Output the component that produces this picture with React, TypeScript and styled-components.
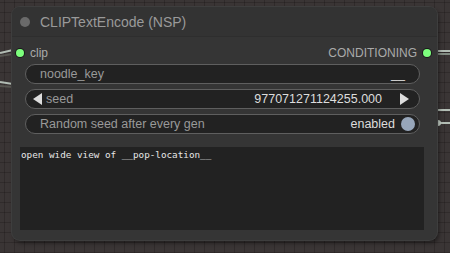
import React from "react";
import styled, { createGlobalStyle } from "styled-components";

const Global = createGlobalStyle`
  html, body { margin: 0; padding: 0; }
  body {
    width: 450px; height: 253px; overflow: hidden;
    background-color: #3a3535;
    background-image:
      linear-gradient(rgba(0,0,0,0.18) 1px, transparent 1px),
      linear-gradient(90deg, rgba(0,0,0,0.18) 1px, transparent 1px);
    background-size: 10px 10px;
    background-position: 4px 2px;
    font-family: "Liberation Sans", Arial, sans-serif;
  }
`;

const Canvas = styled.div`
  position: relative;
  width: 450px;
  height: 253px;
  padding: 7px 0 0 12px;
  box-sizing: border-box;
`;

const Wires = styled.svg`
  position: absolute;
  left: 0;
  top: 0;
  pointer-events: none;
`;

const Node = styled.div`
  position: relative;
  width: 425px;
  height: 233px;
  background: #353535;
  border-radius: 8px;
  box-shadow: 0 0 0 1px #3e3e3e, 2px 3px 4px rgba(0,0,0,0.45);
  display: flex;
  flex-direction: column;
  overflow: hidden;
`;

const Header = styled.div`
  height: 30px;
  flex: none;
  display: flex;
  align-items: center;
  padding-left: 8px;
  gap: 10px;
  background: #333333;
  border-bottom: 1px solid #2e2e2e;
  box-sizing: border-box;
`;

const HeaderDot = styled.span`
  width: 10px;
  height: 10px;
  border-radius: 50%;
  background: #6a6a6a;
`;

const Title = styled.span`
  font-size: 14px;
  color: #9a9a9a;
`;

const Body = styled.div`
  display: flex;
  flex-direction: column;
  padding-top: 5px;
`;

const SlotRow = styled.div`
  height: 21px;
  display: flex;
  align-items: center;
  justify-content: space-between;
  padding: 0 6px 0 4px;
  font-size: 12px;
  color: #aaaaaa;
`;

const Slot = styled.div`
  display: flex;
  align-items: center;
  gap: 6px;
`;

const SlotDot = styled.span`
  width: 8px;
  height: 8px;
  border-radius: 50%;
  background: #7dff7d;
  box-shadow: 0 0 0 1px #1a1a1a;
`;

const Widgets = styled.div`
  display: flex;
  flex-direction: column;
  gap: 5px;
  padding: 1px 17px 0 13px;
`;

const Widget = styled.div<{ $pr?: number }>`
  height: 20px;
  box-sizing: border-box;
  border: 1px solid #5f5f5f;
  border-radius: 10px;
  background: #222222;
  display: flex;
  align-items: center;
  padding: 0 ${(p) => p.$pr ?? 14}px 0 14px;
  font-size: 12.5px;
  color: #999999;
  gap: 4px;
`;

const Label = styled.span`
  flex: 1;
  white-space: nowrap;
`;

const Value = styled.span`
  color: #dddddd;
  white-space: nowrap;
`;

const Arrow = styled.span<{ $dir: "l" | "r" }>`
  width: 0;
  height: 0;
  border-top: 6px solid transparent;
  border-bottom: 6px solid transparent;
  ${(p) => (p.$dir === "l" ? "border-right: 9px solid #dddddd;" : "border-left: 9px solid #dddddd;")}
  margin: ${(p) => (p.$dir === "l" ? "0 0 0 -7px" : "0 -4px 0 14px")};
`;

const Toggle = styled.span`
  width: 14px;
  height: 14px;
  border-radius: 50%;
  background: #97a6ba;
  margin-left: 2px;
`;

const TextArea = styled.div`
  margin: 13px 13px 0 8px;
  height: 83px;
  background: #222222;
  font-family: "DejaVu Sans Mono", "Liberation Mono", monospace;
  font-size: 9.3px;
  color: #e6e6e6;
  padding: 2px 1px;
  box-sizing: border-box;
  white-space: pre;
`;

export default function App() {
  return (
    <>
      <Global />
      <Canvas>
        <Wires width="450" height="253">
          <g stroke="#c9d6cc" strokeWidth="2" fill="none" opacity="0.85">
            <path d="M0 53 L13 50" />
            <path d="M0 56 L13 54" stroke="#5b5b55" />
            <path d="M0 82 L13 84" />
            <path d="M0 86 L13 87" stroke="#5b5b55" />
            <path d="M436 51 L450 51" />
            <path d="M436 54 L450 54" stroke="#8e9a90" />
            <path d="M436 110 L450 110" />
            <path d="M436 123 L450 123" />
          </g>
          <circle cx="438" cy="123" r="3" fill="#c9d6cc" />
        </Wires>
        <Node>
          <Header>
            <HeaderDot />
            <Title>CLIPTextEncode (NSP)</Title>
          </Header>
          <Body>
            <SlotRow>
              <Slot>
                <SlotDot />
                <span>clip</span>
              </Slot>
              <Slot>
                <span>CONDITIONING</span>
                <SlotDot />
              </Slot>
            </SlotRow>
            <Widgets>
              <Widget>
                <Label>noodle_key</Label>
                <Value>__</Value>
              </Widget>
              <Widget>
                <Arrow $dir="l" />
                <Label>seed</Label>
                <Value>977071271124255.000</Value>
                <Arrow $dir="r" />
              </Widget>
              <Widget $pr={4}>
                <Label>Random seed after every gen</Label>
                <Value>enabled</Value>
                <Toggle />
              </Widget>
            </Widgets>
            <TextArea>open wide view of __pop-location__</TextArea>
          </Body>
        </Node>
      </Canvas>
    </>
  );
}
